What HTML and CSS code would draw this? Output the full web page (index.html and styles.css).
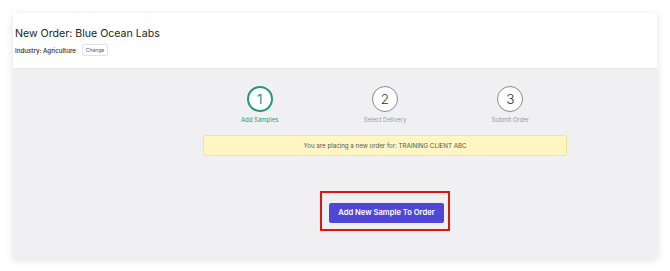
FILE: index.html
```html
<!DOCTYPE html>
<html lang="en">
<head>
    <meta charset="UTF-8">
    <meta name="viewport" content="width=device-width, initial-scale=1.0">
    <title>New Order</title>
    <link rel="stylesheet" href="styles.css">
</head>
<body>

    <div class="card">
        <!-- Header -->
        <div class="header">
            <h1>New Order: Blue Ocean Labs</h1>
            <div class="industry">
                <span>Industry: Agriculture</span>
                <button class="change">Change</button>
            </div>
        </div>

        <!-- Body -->
        <div class="content">
            <div class="column">
                <div class="steps">
                    <div class="step active">
                        <div class="circle">1</div>
                        <div class="label">Add Samples</div>
                    </div>
                    <div class="step">
                        <div class="circle">2</div>
                        <div class="label">Select Delivery</div>
                    </div>
                    <div class="step">
                        <div class="circle">3</div>
                        <div class="label">Submit Order</div>
                    </div>
                </div>

                <div class="notice">You are placing a new order for: TRAINING CLIENT ABC</div>

                <div class="highlight">
                    <button class="add">Add New Sample To Order</button>
                </div>
            </div>
        </div>
    </div>

</body>
</html>
```

FILE: styles.css
```css
body {
    font-family: Inter, "Noto Sans", sans-serif;
    margin: 0;
    padding: 13px;
    background: #ffffff;
}
.card {
    background: #f0f0f3;
    box-shadow: 0 2px 8px rgba(0, 0, 0, 0.12);
    height: 245px;
    display: flex;
    flex-direction: column;
}
.header {
    background: #ffffff;
    padding: 14px 2px 0;
    height: 41px;
    border-bottom: 1px solid #e6e6ea;
}
h1 {
    margin: 0;
    font-size: 10.6px;
    font-weight: 400;
    color: #222;
}
.industry {
    display: flex;
    align-items: center;
    gap: 6px;
    margin-top: 4px;
    font-size: 6.2px;
    font-weight: 500;
    color: #2a2a2a;
}
.change {
    font-family: inherit;
    font-size: 5px;
    color: #555;
    background: #fff;
    border: 1px solid #e2e2e2;
    border-radius: 2px;
    padding: 2px 3px;
}
.content {
    flex: 1;
    display: flex;
    justify-content: center;
    padding-left: 100px;
}
.column {
    width: 364px;
    display: flex;
    flex-direction: column;
    align-items: center;
}
.steps {
    width: 376px;
    display: flex;
    margin-top: 17px;
}
.step {
    flex: 1;
    display: flex;
    flex-direction: column;
    align-items: center;
}
.circle {
    width: 24px;
    height: 24px;
    border: 1px solid #8a8a8a;
    border-radius: 50%;
    display: flex;
    align-items: center;
    justify-content: center;
    font-size: 13.5px;
    font-weight: 300;
    color: #333;
    background: #fff;
}
.label {
    margin-top: 4px;
    font-size: 6px;
    color: #999;
}
.active .circle {
    border: 2px solid #1f9a74;
    width: 22px;
    height: 22px;
    font-weight: 400;
    color: #1f9a74;
}
.active .label {
    color: #1f9a74;
}
.notice {
    width: 362px;
    margin-top: 12px;
    padding: 6px 0;
    background: #fff6c3;
    border: 1px solid #f2e39a;
    border-radius: 2px;
    text-align: center;
    font-size: 6.2px;
    color: #555;
}
.highlight {
    margin-top: 35px;
    border: 2px solid #e0160d;
    padding: 6px 4px 6px 7px;
}
.add {
    font-family: inherit;
    font-size: 7.6px;
    font-weight: 600;
    color: #fff;
    background: #5046d8;
    border: none;
    border-radius: 2px;
    padding: 5.5px 9.5px;
}
```
